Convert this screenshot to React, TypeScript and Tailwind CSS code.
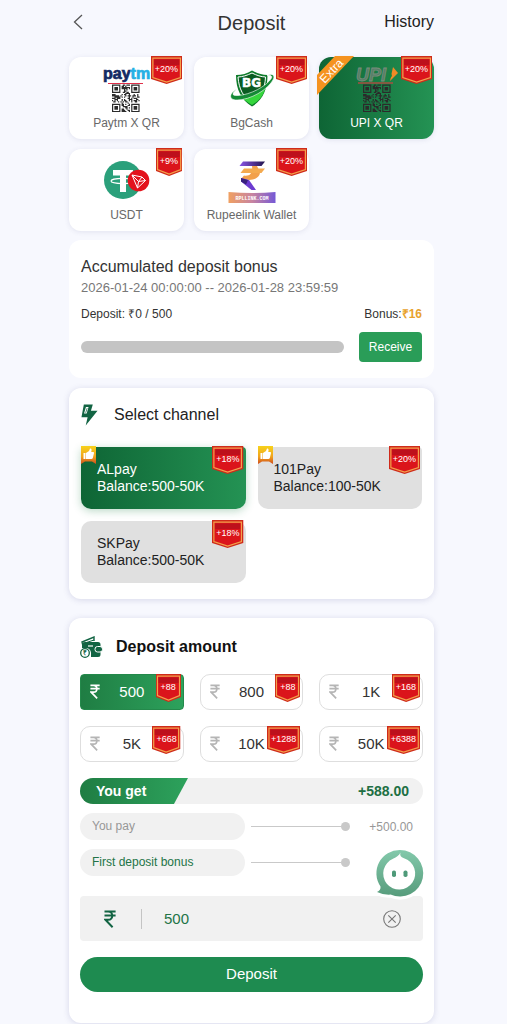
import { useState, type ReactNode } from "react";

function Ribbon({ label }: { label: string }) {
  return (
    <span className="absolute right-[2px] -top-px flex h-7 min-w-[25px] justify-center px-1 text-[9px] leading-[26px] text-white">
      <svg className="absolute inset-0 h-full w-full" viewBox="0 0 100 28" preserveAspectRatio="none" aria-hidden="true">
        <path d="M0 0H100V23L50 28L0 23Z" fill="#cf2a1a" />
        <path d="M6 2.2H94V21.6L50 26L6 21.6Z" fill="#db141b" stroke="#f3a04c" strokeWidth="1.2" vectorEffect="non-scaling-stroke" />
        <path d="M10 3.5H90V9H10Z" fill="#bd101c" />
      </svg>
      <span className="relative">{label}</span>
    </span>
  );
}

function Rupee({ className }: { className: string }) {
  return (
    <svg viewBox="0 0 12 18" className={className} fill="none" stroke="currentColor" strokeWidth="2" aria-hidden="true">
      <path d="M0.500 1.6H11.600M0.500 5.6H11.600M0.500 1.6H4.2C9.6 1.6 9.6 9.8 4.2 9.8H1.4L8.6 17.300" />
    </svg>
  );
}

const finder = "M0 0H7V7H0ZM1 1V6H6V1ZM2 2H5V5H2Z";

function qrPath() {
  let seed = 77;
  let d = "";
  for (let y = 0; y < 23; y++) {
    for (let x = 0; x < 23; x++) {
      seed = (seed * 1103515245 + 12345) % 2147483648;
      const corner = (x < 8 || x > 14) && (y < 8 || y > 14);
      if (!corner && seed / 2147483648 > 0.52) d += `M${x} ${y}h1v1h-1z`;
    }
  }
  return d;
}
const modules = qrPath();

function Qr() {
  return (
    <g fillRule="evenodd" fill="#2b2b2b">
      <path d={modules} />
      <path d={finder} />
      <path d={finder} transform="translate(16 0)" />
      <path d={finder} transform="translate(0 16)" />
      <path d={finder} transform="translate(16 16)" />
    </g>
  );
}

function PaytmLogo() {
  return (
    <svg viewBox="0 0 56 50" className="h-[50px] w-14" aria-hidden="true">
      <text x="4" y="15" fontFamily="Liberation Sans, sans-serif" fontWeight="700" fontSize="16" fill="#142a63" stroke="#142a63" strokeWidth="0.7">
        pay<tspan fill="#25b0e4" stroke="#25b0e4">tm</tspan>
      </text>
      <path d="M9 19.500H44" stroke="#e0304a" strokeWidth="1.2" />
      <g transform="translate(13 20.500) scale(1.2)"><Qr /></g>
    </svg>
  );
}

function UpiLogo() {
  return (
    <svg viewBox="0 0 56 50" className="h-[50px] w-14" aria-hidden="true">
      <text x="7" y="17" fontFamily="Liberation Sans, sans-serif" fontWeight="700" fontStyle="italic" fontSize="18" fill="#567f67" stroke="#7b8d7e" strokeWidth="0.8">UPI</text>
      <path d="M44 3L49 9L41 17Z" fill="#f08a26" />
      <path d="M41 7L43 12L39 17Z" fill="#15863f" />
      <path d="M9 19H44" stroke="#a94e40" strokeWidth="1.6" />
      <g transform="translate(14 20.500) scale(1.2)"><Qr /></g>
    </svg>
  );
}

function BgCashLogo() {
  return (
    <svg viewBox="0 0 56 50" className="h-[50px] w-14" aria-hidden="true">
      <path d="M28 6.500C33 9.500 38 11 43.500 11C43.500 25 39 36 28 42.500C17 36 12 25 12 11C18 11 23 9.500 28 6.500Z" fill="#0e7b2a" />
      <path d="M28 9C33 11.500 37 12.800 41.500 13C41 25 37 33 28 39C19 33 15 25 14 13C18.500 12.800 23 11.500 28 9Z" fill="#0a5c21" stroke="#fff" strokeWidth="1" />
      <path d="M16 31C25 33 36 28 41.500 24C39 32 35 37 28 41C23 38 19 35 16 31Z" fill="#35d63c" />
      <path d="M13 25C8 29 7 32 14 31.500C26 31 43 22 47.500 14C48.500 11.500 46 11 43 11.500C48 9 51 11 49.500 15C44 26 26 36 13 36C4 36 5 29 13 25Z" fill="#148a35" stroke="#fff" strokeWidth="0.6" />
      <text x="27.500" y="23" textAnchor="middle" fontFamily="DejaVu Sans, sans-serif" fontWeight="700" fontSize="12" fill="#fff" stroke="#fff" strokeWidth="0.5">BG</text>
    </svg>
  );
}

function UsdtLogo() {
  return (
    <svg viewBox="0 0 56 50" className="h-[50px] w-14" aria-hidden="true">
      <circle cx="24" cy="24" r="19" fill="#2ba07b" />
      <path d="M14 14H34V19.5H27V36H21V19.5H14Z" fill="#fff" />
      <ellipse cx="24" cy="25" rx="12" ry="2.6" fill="none" stroke="#fff" strokeWidth="1.1" />
      <circle cx="39.500" cy="24.500" r="10.800" fill="#e3131c" />
      <path d="M33 19L43 21L46.500 24.500L38.500 32ZM33 19L39.500 25.500L46.500 24.500M39.500 25.500L38.500 32M39.500 25.500L43 21" fill="none" stroke="#fff" strokeWidth="1" strokeLinejoin="round" />
    </svg>
  );
}

function RupeelinkLogo() {
  return (
    <svg viewBox="0 0 56 50" className="h-[50px] w-14" aria-hidden="true">
      <defs>
        <linearGradient id="rl-bar"><stop stopColor="#f0a061" /><stop offset="0.5" stopColor="#c884a0" /><stop offset="1" stopColor="#7559d6" /></linearGradient>
        <linearGradient id="rl-top"><stop stopColor="#8a55e6" /><stop offset="1" stopColor="#22154c" /></linearGradient>
      </defs>
      <path d="M19 5.500H41L37.500 10H15.500Z" fill="url(#rl-top)" />
      <path d="M28 10H33L36 16C36 21 31 24 25 24L17.500 22.500L20 19.500C26 20.500 29 17 28 10Z" fill="#f2a04b" />
      <path d="M20 12.500H41L37.500 17H16.500Z" fill="#f4aa4f" />
      <path d="M17 22L25 24L32 34H27.500L17 25.500Z" fill="#6c3bd0" />
      <path d="M17 22L24 24L22 28.500L17 25.500Z" fill="#38217c" />
      <path d="M4.500 36Q28 38 51.500 36V47H4.500Z" fill="url(#rl-bar)" />
      <text x="28" y="43.500" textAnchor="middle" fontFamily="Liberation Mono, monospace" fontWeight="700" fontSize="5" fill="#fff">RPLLINK.COM</text>
    </svg>
  );
}

const methods: { name: string; bonus: string; logo: ReactNode; extra?: boolean }[] = [
  { name: "Paytm X QR", bonus: "+20%", logo: <PaytmLogo /> },
  { name: "BgCash", bonus: "+20%", logo: <BgCashLogo /> },
  { name: "UPI X QR", bonus: "+20%", logo: <UpiLogo />, extra: true },
  { name: "USDT", bonus: "+9%", logo: <UsdtLogo /> },
  { name: "Rupeelink Wallet", bonus: "+20%", logo: <RupeelinkLogo /> },
];

const channels = [
  { name: "ALpay", range: "500-50K", bonus: "+18%", liked: true },
  { name: "101Pay", range: "100-50K", bonus: "+20%", liked: true },
  { name: "SKPay", range: "500-50K", bonus: "+18%", liked: false },
];

const amounts = [
  { label: "500", value: "500", bonus: "+88" },
  { label: "800", value: "800", bonus: "+88" },
  { label: "1K", value: "1000", bonus: "+168" },
  { label: "5K", value: "5000", bonus: "+668" },
  { label: "10K", value: "10000", bonus: "+1288" },
  { label: "50K", value: "50000", bonus: "+6388" },
];

function ThumbTag() {
  return (
    <svg viewBox="0 0 15 18" className="absolute -top-px left-0 h-[18px] w-[15px]" aria-hidden="true">
      <defs>
        <linearGradient id="thumb" x2="0" y2="1"><stop stopColor="#f7d21b" /><stop offset="0.6" stopColor="#f0a21c" /><stop offset="1" stopColor="#cf4c1c" /></linearGradient>
      </defs>
      <path d="M0 0H15V18L11 15.500H4L0 18Z" fill="url(#thumb)" />
      <path d="M2.500 7H4.500V13H2.500ZM5 7L8 5L9 2.500C10.500 2 11 4 10.200 6H12.500Q13.500 6.500 12.800 8L11.800 12Q11.500 13 10.300 13H5Z" fill="#fff" />
    </svg>
  );
}

function DepositRow({ label, tone, children }: { label: string; tone: string; children?: ReactNode }) {
  return (
    <div className="flex items-center">
      <span className={`h-[27px] w-[165px] rounded-full bg-[#f1f1f1] px-3 text-xs leading-[27px] ${tone}`}>{label}</span>
      <span className="ml-1.5 flex flex-1 items-center">
        <span className="h-px flex-1 bg-[#c9c9c9]" />
        <span className="size-[9px] rounded-full bg-[#c9c9c9]" />
      </span>
      <span className="w-[73px] pr-2.5 text-right text-xs text-[#979797]">{children}</span>
    </div>
  );
}

export default function App() {
  const [method, setMethod] = useState("UPI X QR");
  const [channel, setChannel] = useState("ALpay");
  const [amount, setAmount] = useState("500");

  return (
    <div className="min-h-screen bg-[#f7f8fe] pr-[73px] pl-[69px] font-['Liberation_Sans',Arial,sans-serif] text-[#333]">
      <header className="grid h-[57px] grid-cols-[1fr_auto_1fr] items-start pt-2">
        <button type="button" aria-label="Back" className="flex h-7 w-5 items-center pl-1">
          <svg viewBox="0 0 10 16" className="h-4 w-2.5" fill="none" stroke="#555" strokeWidth="1.3" aria-hidden="true"><path d="M9 1L1.500 8L9 15" /></svg>
        </button>
        <h1 className="text-xl leading-[30px]">Deposit</h1>
        <a href="#history" className="justify-self-end text-base leading-7 text-[#222]">History</a>
      </header>

      <main>
        <section aria-label="Payment method" className="grid grid-cols-3 gap-2.5">
          {methods.map((m) => {
            const on = m.name === method;
            return (
              <button
                key={m.name}
                type="button"
                aria-pressed={on}
                onClick={() => setMethod(m.name)}
                className={`relative flex h-[82px] flex-col items-center rounded-xl pt-[7px] text-xs shadow-[0_1px_5px_rgba(70,70,130,0.12)] ${on ? "bg-linear-to-r from-[#0e6535] to-[#249354] text-white" : "bg-white text-[#686868]"}`}
              >
                {m.logo}
                <span className="leading-[18px] whitespace-nowrap">{m.name}</span>
                {m.extra && (
                  <svg viewBox="0 0 40 42" className="absolute -top-0.5 -left-0.5 h-[42px] w-10" aria-hidden="true">
                    <path d="M0 40V20L18 1H37Z" fill="#f5931f" />
                    <text x="14.500" y="20" transform="rotate(-47 14.500 16)" textAnchor="middle" fontFamily="Liberation Sans, sans-serif" fontSize="12" fill="#fff">Extra</text>
                  </svg>
                )}
                <Ribbon label={m.bonus} />
              </button>
            );
          })}
        </section>

        <section className="mt-[9px] h-[138px] rounded-xl bg-white px-3 pt-4">
          <h2 className="text-base leading-[22px]">Accumulated deposit bonus</h2>
          <p className="text-[13px] leading-5 text-[#777]">2026-01-24 00:00:00 -- 2026-01-28 23:59:59</p>
          <div className="mt-2 flex justify-between text-xs leading-4">
            <span>Deposit: ₹0 / 500</span>
            <span>Bonus:<b className="text-[#e8a22e]">₹16</b></span>
          </div>
          <div className="mt-2.5 flex items-center gap-[15px]">
            <div role="progressbar" aria-label="Deposit progress" aria-valuenow={0} aria-valuemin={0} aria-valuemax={500} className="h-3 flex-1 rounded-full bg-[#c4c4c4]" />
            <button type="button" className="h-[30px] w-[63px] rounded-sm bg-[#2a9d58] text-xs text-white">Receive</button>
          </div>
        </section>

        <section className="mt-2.5 h-[211px] rounded-xl bg-white px-3 pt-4 shadow-[0_1px_6px_rgba(70,70,140,0.18)]">
          <div className="flex items-center">
            <svg viewBox="0 0 18 22" className="h-[22px] w-[17px]" aria-hidden="true">
              <path d="M3 0H12.500L10.500 6.500H17.500L5 22L7 13.500H0.500Z" fill="#126443" />
              <path d="M5.200 2.500H8L6 9.500H3.200Z" fill="#fff" />
              <path d="M6.200 3.500H6.900L5.300 8.500H4.600Z" fill="#126443" />
            </svg>
            <h2 className="ml-4 text-base leading-[22px] text-[#222]">Select channel</h2>
          </div>
          <div className="mt-[21px] grid grid-cols-2 gap-3">
            {channels.map((c) => {
              const on = c.name === channel;
              return (
                <button
                  key={c.name}
                  type="button"
                  aria-pressed={on}
                  onClick={() => setChannel(c.name)}
                  className={`relative h-[62px] rounded-b-[10px] px-4 text-left text-sm leading-[17px] ${c.liked ? "rounded-t-sm" : "rounded-t-[10px]"} ${on ? "bg-linear-to-r from-[#0e6535] to-[#249354] text-white shadow-[0_2px_8px_rgba(30,130,70,0.3)]" : "bg-[#e0e0e0] text-[#222]"}`}
                >
                  <span className="block">{c.name}</span>
                  <span className="block">Balance:{c.range}</span>
                  {c.liked && <ThumbTag />}
                  <Ribbon label={c.bonus} />
                </button>
              );
            })}
          </div>
        </section>

        <section className="mt-[19px] rounded-xl bg-white px-[11px] pt-[18px] pb-[31px] shadow-[0_1px_6px_rgba(70,70,140,0.18)]">
          <div className="flex items-center">
            <svg viewBox="0 0 23 22" className="h-[22px] w-[23px]" aria-hidden="true">
              <path d="M3 10L2 6L14 1V5" fill="none" stroke="#126443" strokeWidth="1.4" />
              <path d="M5 7L14 4" stroke="#126443" strokeWidth="1" />
              <path d="M2 8Q2 6 5 6H18Q20.500 6 20.500 8.500V18.500Q20.500 21 18 21H11Q12 13 7 12H2Z" fill="#126443" />
              <rect x="15" y="10.500" width="7.500" height="5.500" rx="2.500" fill="#126443" stroke="#fff" strokeWidth="1" />
              <path d="M8 10H13" stroke="#fff" strokeWidth="1.200" />
              <circle cx="5" cy="17" r="4.300" fill="#fff" stroke="#126443" strokeWidth="1.300" />
              <text x="5" y="19.200" textAnchor="middle" fontFamily="Liberation Sans, sans-serif" fontWeight="700" fontSize="6.500" fill="#126443">₹</text>
            </svg>
            <h2 className="ml-[13px] text-base leading-[22px] font-bold text-[#111]">Deposit amount</h2>
          </div>

          <div className="mt-4 grid grid-cols-3 gap-4">
            {amounts.map((a) => {
              const on = a.value === amount;
              return (
                <button
                  key={a.label}
                  type="button"
                  aria-pressed={on}
                  onClick={() => setAmount(a.value)}
                  className={`relative h-9 border text-center text-[15px] ${on ? "rounded-sm border-[#24894b] bg-linear-to-r from-[#1f7d43] to-[#2da25c] text-white" : "rounded-[10px] border-[#dedede] bg-white text-[#333]"}`}
                >
                  <Rupee className={`absolute top-[9px] left-[9px] h-[15px] w-2.5 ${on ? "text-white" : "text-[#b5b5b5]"}`} />
                  {a.label}
                  <Ribbon label={a.bonus} />
                </button>
              );
            })}
          </div>

          <div className="mt-4 flex h-[26px] items-center justify-between overflow-hidden rounded-full bg-[#f1f1f1] pr-3.5 text-sm font-bold">
            <span className="h-full w-[108px] bg-linear-to-r from-[#1f7d43] to-[#2da25c] pl-4 leading-[26px] text-white [clip-path:polygon(0_0,100%_0,87%_100%,0_100%)]">You get</span>
            <span className="text-[#206f43]">+588.00</span>
          </div>

          <div className="relative mt-[9px] flex flex-col gap-[9px]">
            <DepositRow label="You pay" tone="text-[#979797]">+500.00</DepositRow>
            <DepositRow label="First deposit bonus" tone="text-[#237447]" />
            <button type="button" aria-label="Support chat" className="absolute top-9 -right-0.5 z-10">
              <svg viewBox="0 0 52 52" className="size-[52px] overflow-visible" aria-hidden="true">
                <defs>
                  <linearGradient id="chat" x2="0" y2="1"><stop stopColor="#83c9ab" /><stop offset="1" stopColor="#579c7c" /></linearGradient>
                </defs>
                <path d="M27 1A23.300 23.300 0 1 1 17.500 45.600Q10 46 4 43Q8 41 7.500 37.500A23.300 23.300 0 0 1 27 1Z" fill="url(#chat)" stroke="#fff" strokeWidth="6" paintOrder="stroke" />
                <path d="M27.500 3.500Q26 7.500 31 9.300A16 16 0 1 1 20 9.800Q25.500 7.500 27.500 3.500Z" fill="#fff" />
                <rect x="19" y="21.500" width="4" height="6.500" rx="1.800" fill="#4e9a79" />
                <rect x="30.500" y="21.500" width="4" height="6.500" rx="1.800" fill="#4e9a79" />
              </svg>
            </button>
          </div>

          <div className="mt-5 flex h-[45px] items-center rounded-sm bg-[#f1f1f1] px-[22px]">
            <Rupee className="ml-0.5 h-[18px] w-3 text-[#126443]" />
            <span className="mr-[22px] ml-[25px] h-5 w-px bg-[#c4c4c4]" />
            <input
              aria-label="Amount"
              inputMode="numeric"
              value={amount}
              onChange={(e) => setAmount(e.target.value)}
              className="h-full min-w-0 flex-1 bg-transparent text-[15px] text-[#237447] outline-none"
            />
            <button type="button" aria-label="Clear amount" onClick={() => setAmount("")}>
              <svg viewBox="0 0 18 18" className="size-[18px]" fill="none" stroke="#777" strokeWidth="1.1" aria-hidden="true">
                <circle cx="9" cy="9" r="8.300" />
                <path d="M5.300 5.300L12.700 12.700M12.700 5.300L5.300 12.700" />
              </svg>
            </button>
          </div>
          <button type="button" className="mt-4 h-[35px] w-full rounded-full bg-[#1e8b50] text-[15px] text-white">Deposit</button>
        </section>
      </main>
    </div>
  );
}
